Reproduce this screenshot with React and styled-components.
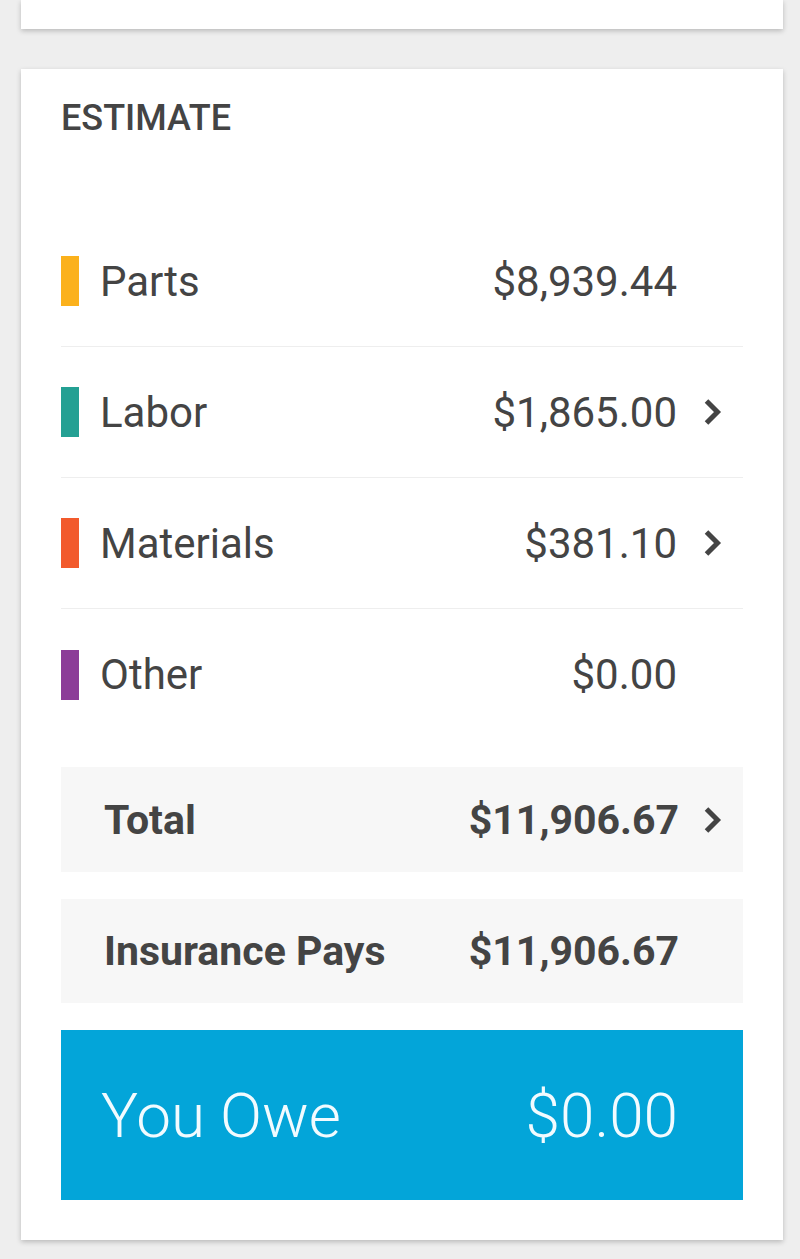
import React from "react";
import styled, { createGlobalStyle } from "styled-components";

const GlobalStyle = createGlobalStyle`
  html, body {
    margin: 0;
    padding: 0;
    background: #eeeeee;
    font-family: Roboto, "Noto Sans", sans-serif;
    color: #444444;
  }
`

const Page = styled.div`
  display: flex;
  flex-direction: column;
  gap: 40px;
  padding: 0 17px 19px 21px;
`
const Card = styled.div`
  background: #ffffff;
  box-shadow: 0 2px 5px rgba(0, 0, 0, 0.22);
`
const TopCard = styled(Card)`
  height: 29px;
`
const EstimateCard = styled(Card)`
  padding: 31px 40px 40px 40px;
`
const Heading = styled.div`
  font-size: 36px;
  line-height: 36px;
  font-weight: 500;
  color: #444444;
  margin-bottom: 80px;
`
const Row = styled.div`
  display: flex;
  align-items: center;
  height: 131px;
  box-sizing: border-box;
  border-bottom: ${(p) => (p.last ? "none" : "1px solid #eeeeee")};
`
const Bar = styled.div`
  width: 18px;
  height: 50px;
  background: ${(p) => p.color};
  margin-right: 21px;
`
const Label = styled.div`
  flex: 1;
  font-size: 42px;
  font-weight: 400;
`
const Amount = styled.div`
  font-size: 42px;
  font-weight: 400;
`
const ChevronSlot = styled.div`
  width: 66px;
  display: flex;
  align-items: center;
  padding-left: 25px;
  box-sizing: border-box;
`
const SummaryBox = styled.div`
  display: flex;
  align-items: center;
  height: ${(p) => p.h}px;
  margin-top: ${(p) => p.mt}px;
  padding-left: 43px;
  background: #f7f7f7;
  font-size: 41px;
  font-weight: 700;
`
const SummaryLabel = styled.div`
  flex: 1;
`
const SummaryAmount = styled.div`
  margin-right: -2px;
`
const OweBox = styled.div`
  display: flex;
  align-items: center;
  justify-content: space-between;
  height: 170px;
  margin-top: 27px;
  padding: 0 65px 0 40px;
  background: #03a5d9;
  color: #f2fbff;
  font-size: 62px;
  font-weight: 300;
`

const Chevron = () => (
  <svg width="22" height="28" viewBox="0 0 22 28">
    <path d="M4.5 3 L15.5 14 L4.5 25" fill="none" stroke="#444444" strokeWidth="5" />
  </svg>
)

const items = [
  { label: "Parts", amount: "$8,939.44", color: "#fbb11c", more: false },
  { label: "Labor", amount: "$1,865.00", color: "#24a093", more: true },
  { label: "Materials", amount: "$381.10", color: "#f25a2c", more: true },
  { label: "Other", amount: "$0.00", color: "#8c3c98", more: false },
]

const App = () => {
  return (
    <Page>
      <GlobalStyle />
      <TopCard />
      <EstimateCard>
        <Heading>ESTIMATE</Heading>
        {items.map((item, i) => (
          <Row key={item.label} last={i === items.length - 1}>
            <Bar color={item.color} />
            <Label>{item.label}</Label>
            <Amount>{item.amount}</Amount>
            <ChevronSlot>{item.more && <Chevron />}</ChevronSlot>
          </Row>
        ))}
        <SummaryBox h={105} mt={27}>
          <SummaryLabel>Total</SummaryLabel>
          <SummaryAmount>$11,906.67</SummaryAmount>
          <ChevronSlot>
            <Chevron />
          </ChevronSlot>
        </SummaryBox>
        <SummaryBox h={104} mt={27}>
          <SummaryLabel>Insurance Pays</SummaryLabel>
          <SummaryAmount>$11,906.67</SummaryAmount>
          <ChevronSlot />
        </SummaryBox>
        <OweBox>
          <div>You Owe</div>
          <div>$0.00</div>
        </OweBox>
      </EstimateCard>
    </Page>
  )
}

export default App
